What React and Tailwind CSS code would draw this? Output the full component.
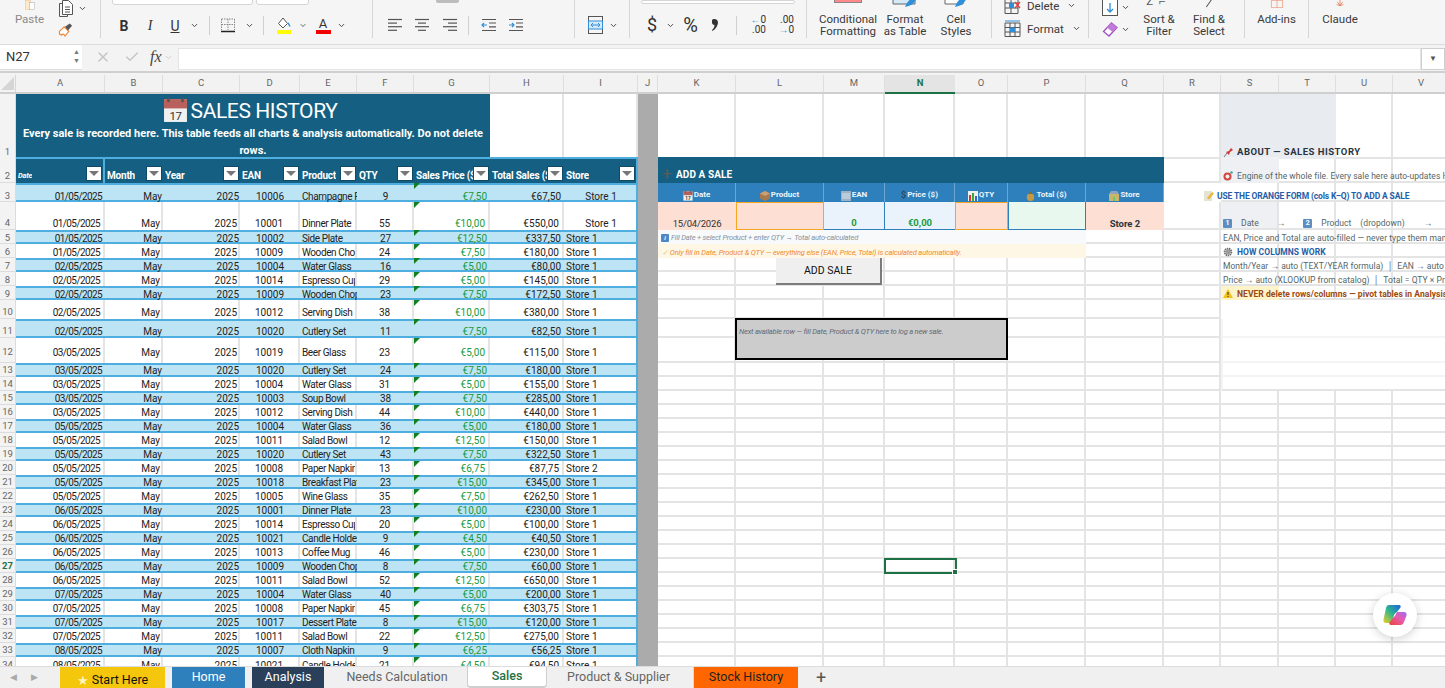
import { Check, ChevronDown, X } from "lucide-react";

const GRID =
  "grid grid-cols-[16px_89px_58px_77px_60px_57px_57px_76px_74px_74px_20px_78px_88px_61px_70px_53px_78px_78px_57px_58px_57px_57px_57px]";

const LETTERS = "ABCDEFGHIJKLMNOPQRSTUV".split("");

const SALES = [
  ["01/05/2025", "10006", "Champagne Flute", 9, "7,50", "67,50"],
  ["01/05/2025", "10001", "Dinner Plate", 55, "10,00", "550,00"],
  ["01/05/2025", "10002", "Side Plate", 27, "12,50", "337,50"],
  ["01/05/2025", "10009", "Wooden Chopsticks", 24, "7,50", "180,00"],
  ["02/05/2025", "10004", "Water Glass", 16, "5,00", "80,00"],
  ["02/05/2025", "10014", "Espresso Cup", 29, "5,00", "145,00"],
  ["02/05/2025", "10009", "Wooden Chopsticks", 23, "7,50", "172,50"],
  ["02/05/2025", "10012", "Serving Dish", 38, "10,00", "380,00"],
  ["02/05/2025", "10020", "Cutlery Set", 11, "7,50", "82,50"],
  ["03/05/2025", "10019", "Beer Glass", 23, "5,00", "115,00"],
  ["03/05/2025", "10020", "Cutlery Set", 24, "7,50", "180,00"],
  ["03/05/2025", "10004", "Water Glass", 31, "5,00", "155,00"],
  ["03/05/2025", "10003", "Soup Bowl", 38, "7,50", "285,00"],
  ["03/05/2025", "10012", "Serving Dish", 44, "10,00", "440,00"],
  ["05/05/2025", "10004", "Water Glass", 36, "5,00", "180,00"],
  ["05/05/2025", "10011", "Salad Bowl", 12, "12,50", "150,00"],
  ["05/05/2025", "10020", "Cutlery Set", 43, "7,50", "322,50"],
  ["05/05/2025", "10008", "Paper Napkin", 13, "6,75", "87,75", "Store 2"],
  ["05/05/2025", "10018", "Breakfast Plate", 23, "15,00", "345,00"],
  ["05/05/2025", "10005", "Wine Glass", 35, "7,50", "262,50"],
  ["06/05/2025", "10001", "Dinner Plate", 23, "10,00", "230,00"],
  ["06/05/2025", "10014", "Espresso Cup", 20, "5,00", "100,00"],
  ["06/05/2025", "10021", "Candle Holder", 9, "4,50", "40,50"],
  ["06/05/2025", "10013", "Coffee Mug", 46, "5,00", "230,00"],
  ["06/05/2025", "10009", "Wooden Chopsticks", 8, "7,50", "60,00"],
  ["06/05/2025", "10011", "Salad Bowl", 52, "12,50", "650,00"],
  ["07/05/2025", "10004", "Water Glass", 40, "5,00", "200,00"],
  ["07/05/2025", "10008", "Paper Napkin", 45, "6,75", "303,75"],
  ["07/05/2025", "10017", "Dessert Plate", 8, "15,00", "120,00"],
  ["07/05/2025", "10011", "Salad Bowl", 22, "12,50", "275,00"],
  ["08/05/2025", "10007", "Cloth Napkin", 9, "6,25", "56,25"],
  ["08/05/2025", "10021", "Candle Holder", 21, "4,50", "94,50"],
];

const rowHeight = (n) => {
  if (n === 1) return "h-[63px]";
  if (n === 2) return "h-[26px]";
  if (n === 3) return "h-[19px]";
  if (n === 4) return "h-[28px]";
  if (n === 10 || n === 11) return "h-[19px]";
  if (n === 12) return "h-[24.5px]";
  if (n < 10) return "h-[14px]";
  return "h-[14.05px]";
};

// rows 3 and 5-9 sit one pixel lower in their cell, row 12 floats higher
const textFit = (n) => {
  if (n === 12) return "leading-[12px] pb-[4px]";
  if (n === 3 || (n >= 5 && n <= 9)) return "leading-[10px]";
  return "leading-[12px]";
};

const Blank = ({ className = "border-[#e4e4e4]" }) => (
  <div className={`border-r-2 border-b-2 ${className}`} />
);

const Chev = ({ className = "" }) => (
  <ChevronDown size={9} strokeWidth={2.5} className={`text-[#444] ${className}`} />
);

const Divider = ({ className = "" }) => (
  <div className={`w-px h-[19px] bg-[#cfcfcf] ${className}`} />
);

const Lines = ({ rows }) => (
  <svg width="14" height="14" viewBox="0 0 14 14" stroke="#555" strokeWidth="1.2">
    {rows.map(([a, b], i) => (
      <line key={i} x1={a} x2={b} y1={1.5 + i * 3.6} y2={1.5 + i * 3.6} />
    ))}
  </svg>
);

const Indent = ({ flip }) => (
  <svg width="15" height="14" viewBox="0 0 15 14" fill="none">
    <path d="M1 1.5h14M8 5h7M8 8.800h7M1 12.500h14" stroke="#555" strokeWidth="1.200" />
    <path
      d={flip ? "M1 7h5M4 5l2 2-2 2" : "M1 7h5M3 5L1 7l2 2"}
      stroke="#2f8fd8"
      strokeWidth="1.200"
    />
  </svg>
);

const Ribbon = () => (
  <div className="flex h-[45px] shrink-0 overflow-hidden bg-[#f5f5f5] border-b border-[#dcdcdc] text-[#3a3a3a] text-[11.500px] leading-[12px]">
    {/* clipboard */}
    <div className="flex w-[101px] shrink-0 border-r border-[#d6d6d6] mb-[6px]">
      <div className="w-[59px] flex flex-col items-center justify-end pb-[13px]">
        <svg width="26" height="24" viewBox="0 0 26 24" fill="none">
          <rect x="2" y="1" width="12" height="22" fill="#fdeacb" stroke="#eab67a" />
          <rect x="12" y="6" width="12" height="17" fill="#fff" stroke="#999" />
        </svg>
        <span className="text-[#8a8a8a] mt-[3px]">Paste</span>
      </div>
      <div className="flex flex-col justify-end pb-[1px] gap-[6px]">
        <div className="flex items-center gap-[5px]">
          <svg width="14" height="17" viewBox="0 0 14 17" fill="none" stroke="#555">
            <path d="M3.500 3.500h-3v13h8v-2" />
            <path d="M3.500.5h6l4 4v10h-10z" fill="#fff" />
            <path d="M6 7h5M6 9.500h5M6 12h5" />
          </svg>
          <Chev />
        </div>
        <svg width="16" height="15" viewBox="0 0 16 15" fill="none" className="ml-[-1px]">
          <path d="M1 9l5-5 5 5-4 5c-1-1-1-2-2-2s-2 1-2 1-1-1-2-1z" fill="#fff" stroke="#ee8a3c" strokeWidth="1.300" />
          <path d="M7 4l5-3.500 2.500 2.500L10 8z" fill="#555" />
        </svg>
      </div>
    </div>

    {/* font */}
    <div className="flex flex-col justify-end w-[272px] shrink-0 border-r border-[#d6d6d6] mb-[6px]">
      <div className="flex pl-[11px] gap-[3px] mb-[11px]">
        <div className="w-[141px] h-[14px] bg-white border border-[#d5d5d5] rounded-[3px]" />
        <div className="w-[53px] h-[14px] bg-white border border-[#d5d5d5] rounded-[3px]" />
      </div>
      <div className="flex items-center h-[20px] pl-[10px] mb-[3px] text-[14px] text-[#333]">
        <span className="w-[26px] text-center font-bold">B</span>
        <span className="w-[26px] text-center italic font-[Liberation_Serif,serif]">I</span>
        <span className="w-[24px] text-center underline">U</span>
        <span className="w-[14px] flex justify-center"><Chev /></span>
        <Divider className="ml-[8px]" />
        <svg width="16" height="15" viewBox="0 0 16 15" fill="none" className="ml-[10px]">
          <path d="M1.500 1h13M1.500 1v11M14.500 1v11M8 1v11M1.500 6.500h13" stroke="#888" strokeDasharray="1.500 1" />
          <path d="M1 13.500h14" stroke="#222" strokeWidth="1.500" />
        </svg>
        <span className="w-[10px] ml-[8px] flex justify-center"><Chev /></span>
        <Divider className="ml-[9px]" />
        <svg width="14" height="17" viewBox="0 0 14 17" fill="none" className="ml-[13px]">
          <path d="M6 1L1.500 6.500 6 11l4.500-4.500z" stroke="#555" fill="#fff" />
          <path d="M11 6c1 1.500 1.800 2.500 1.800 3.500" stroke="#2f8fd8" strokeWidth="1.500" />
          <rect x="0" y="13" width="14" height="4" fill="#ffff00" />
        </svg>
        <span className="w-[8px] ml-[8px] flex justify-center"><Chev /></span>
        <span className="w-[14px] ml-[9px] flex flex-col items-center text-[13px] leading-[13px]">
          A
          <span className="w-[15px] h-[4px] bg-[#f00000] block" />
        </span>
        <span className="w-[10px] ml-[6px] flex justify-center"><Chev /></span>
      </div>
    </div>

    {/* alignment */}
    <div className="flex flex-col justify-end w-[202px] shrink-0 border-r border-[#d6d6d6] mb-[6px]">
      <div className="w-[23px] h-[3px] ml-[63px] mb-[13px] bg-[#bdbdbd] rounded-b-[2px]" />
      <div className="flex items-center h-[20px] pl-[15px] mb-[3px]">
        <Lines rows={[[0, 14], [0, 9], [0, 14], [0, 9]]} />
        <span className="ml-[13px]"><Lines rows={[[0, 14], [3, 11], [0, 14], [3, 11]]} /></span>
        <span className="ml-[14px]"><Lines rows={[[0, 14], [5, 14], [0, 14], [5, 14]]} /></span>
        <Divider className="ml-[11px]" />
        <span className="ml-[12px]"><Indent /></span>
        <span className="ml-[12px]"><Indent flip /></span>
      </div>
    </div>

    {/* merge */}
    <div className="flex items-end w-[55px] shrink-0 border-r border-[#d6d6d6] mb-[6px] pl-[13px] pb-[4px] gap-[6px]">
      <svg width="15" height="18" viewBox="0 0 15 18" fill="none">
        <rect x=".5" y=".5" width="14" height="17" stroke="#555" />
        <rect x=".5" y="5" width="14" height="8" fill="#d6e9f8" stroke="#2f8fd8" />
        <path d="M3 9h9M3 9l2-2M3 9l2 2M12 9l-2-2M12 9l-2 2" stroke="#2f8fd8" />
      </svg>
      <Chev className="mb-[4px]" />
    </div>

    {/* number */}
    <div className="flex flex-col justify-end w-[177px] shrink-0 border-r border-[#d6d6d6] mb-[6px]">
      <div className="w-[154px] h-[14px] ml-[11px] mb-[11px] bg-white border border-[#d5d5d5] rounded-[3px]" />
      <div className="flex items-center h-[20px] pl-[17px] mb-[3px] text-[#333]">
        <span className="text-[18px] w-[10px] text-center">$</span>
        <Chev className="ml-[9px]" />
        <span className="text-[20px] ml-[6px] w-[19px] text-center">%</span>
        <svg width="7" height="12" viewBox="0 0 7 12" className="ml-[11px]">
          <path d="M1 1.500C1 .5 2 0 3.500 0S7 1 7 3.500 5 10 1.500 12L1 11c1.500-1 2.500-3 2.500-5C2 6 1 5 1 3.500z" fill="#333" />
        </svg>
        <Divider className="ml-[18px]" />
        <span className="ml-[11px] w-[18px] text-[10px] leading-[10px] text-right">
          <span className="text-[#2f8fd8]">←</span>0<br />.00
        </span>
        <span className="ml-[10px] w-[18px] text-[10px] leading-[10px] text-right">
          .00<br /><span className="text-[#2f8fd8]">→</span>0
        </span>
      </div>
    </div>

    {/* styles */}
    <div className="flex w-[185px] shrink-0 border-r border-[#d6d6d6] mb-[6px] pb-[1px] pl-[7px] items-end text-center">
      <div className="w-[68px] flex flex-col items-center">
        <div className="w-[28px] h-[20px] bg-[#f88] border border-[#888] mb-[10px]" />
        <span>Conditional<br />Formatting</span>
      </div>
      <div className="w-[46px] flex flex-col items-center">
        <svg width="28" height="20" viewBox="0 0 28 20" fill="none" className="mb-[5px]">
          <path d="M2 2h22v14H2z" fill="#d6e9f8" stroke="#666" />
          <path d="M14 19c2-6 6-9 12-11-1 6-5 10-12 11z" fill="#2f8fd8" />
        </svg>
        <span>Format<br />as Table</span>
      </div>
      <div className="w-[56px] flex flex-col items-center">
        <svg width="26" height="20" viewBox="0 0 26 20" fill="none" className="mb-[5px]">
          <path d="M2 2h18v14H2z" fill="#fff" stroke="#666" />
          <path d="M12 19c2-6 5-9 12-11-1 6-5 10-12 11z" fill="#2f8fd8" />
        </svg>
        <span>Cell<br />Styles</span>
      </div>
    </div>

    {/* cells */}
    <div className="flex flex-col justify-end w-[97px] shrink-0 border-r border-[#d6d6d6] mb-[6px] pl-[12px] pb-[1px] gap-[6px]">
      <div className="flex items-center">
        <svg width="18" height="17" viewBox="0 0 18 17" fill="none">
          <path d="M1 .5h13v16H1zM1 6h13M1 11h13M7 .5v16" stroke="#555" />
          <rect x="5" y="6" width="5" height="5" fill="#2f8fd8" />
          <path d="M11 5l5 6M16 5l-5 6" stroke="#e43c3c" strokeWidth="1.300" />
        </svg>
        <span className="ml-[5px] mr-[8px]">Delete</span>
        <Chev />
      </div>
      <div className="flex items-center">
        <svg width="17" height="17" viewBox="0 0 17 17" fill="none">
          <path d="M1 3h15v13.500H1zM1 7.500h15M1 12h15M6 3v13.500M11 3v13.500" stroke="#555" />
          <rect x="6" y="7.500" width="5" height="4.500" fill="#2f8fd8" />
          <path d="M1 1h15" stroke="#2f8fd8" />
        </svg>
        <span className="ml-[6px] mr-[8px]">Format</span>
        <Chev />
      </div>
    </div>

    {/* editing */}
    <div className="flex w-[156px] shrink-0 border-r border-[#d6d6d6] mb-[6px] pb-[1px] items-end text-center">
      <div className="w-[44px] flex flex-col pl-[13px] gap-[6px]">
        <div className="flex items-center gap-[3px]">
          <svg width="16" height="18" viewBox="0 0 16 18" fill="none" className="shrink-0">
            <rect x=".5" y=".5" width="15" height="17" stroke="#555" fill="#fff" />
            <path d="M8 5v9M5 11l3 3 3-3" stroke="#2f8fd8" strokeWidth="1.300" />
          </svg>
          <Chev className="shrink-0" />
        </div>
        <div className="flex items-center gap-[3px]">
          <svg width="16" height="15" viewBox="0 0 16 15" fill="none" className="shrink-0">
            <path d="M9.500 1L15 5.500 7 14 1.500 9.500z" fill="#fff" stroke="#a04fc0" strokeWidth="1.300" />
            <path d="M5 5.500L10.500 10 15 5.500 9.500 1z" fill="#c07ad8" />
          </svg>
          <Chev className="shrink-0" />
        </div>
      </div>
      <div className="w-[52px] flex flex-col items-center">
        <span className="h-[14px] text-[#555] mb-[4px] tracking-[6px]">Z⌐</span>
        <span>Sort &<br />Filter</span>
      </div>
      <div className="w-[48px] flex flex-col items-center">
        <span className="w-px h-[11px] bg-[#555] rotate-[35deg] mb-[5px]" />
        <span>Find &<br />Select</span>
      </div>
    </div>

    <div className="flex flex-col items-center justify-end w-[64px] shrink-0 border-r border-[#d6d6d6] mb-[6px] pb-[13px]">
      <svg width="30" height="20" viewBox="0 0 30 20" fill="none" className="mb-[5px]">
        <path d="M1 1h28v18H1zM15 1v18" stroke="#e8663c" strokeWidth="1.200" />
      </svg>
      <span>Add-ins</span>
    </div>
    <div className="flex flex-col items-center justify-end w-[62px] shrink-0 mb-[6px] pb-[13px]">
      <svg width="20" height="16" viewBox="0 0 20 16" fill="none" stroke="#e0693f" strokeWidth="1.800" className="mb-[7px]">
        <path d="M10 0v15M3 5l7 10M17 5l-7 10M1 12l9 3M19 12l-9 3" />
      </svg>
      <span>Claude</span>
    </div>
  </div>
);

const FormulaBar = () => (
  <div className="flex h-[28px] shrink-0 bg-[#f3f3f3] border-b-2 border-[#cfcfcf] text-[#333]">
    <div className="w-[82px] h-[25px] shrink-0 bg-white flex items-center justify-between pl-[6px] pr-[2px] text-[13px] border-b border-[#ddd]">
      N27
      <span className="text-[7px] leading-[9px] text-[#777]">▲<br />▼</span>
    </div>
    <div className="w-[96px] shrink-0 flex items-center pl-[13px] text-[#c4c4c4] pb-[2px]">
      <X size={16} />
      <Check size={16} className="ml-[13px]" />
      <span className="ml-[10px] text-[#444] text-[16px] italic font-[Liberation_Serif,serif]">fx</span>
      <ChevronDown size={9} className="ml-[2px]" />
    </div>
    <div className="flex-1 h-[22px] mt-[3px] bg-white border border-[#e4e4e4]" />
    <div className="w-[24px] h-[22px] mt-[3px] bg-white border border-[#cfcfcf] flex items-center justify-center text-[8px] text-[#555]">
      ▼
    </div>
  </div>
);

const ColumnHeaders = () => (
  <div className={`${GRID} h-[19px] shrink-0 bg-[#f2f2f2] border-b-2 border-[#cfcfcf] text-[9.500px] text-[#666] mt-[2px]`}>
    <div className="border-r border-[#d8d8d8] bg-[#f2f2f2] flex items-end justify-end">
      <span className="w-0 h-0 border-b-[13px] border-l-[13px] border-b-[#d5d5d5] border-l-transparent mr-[1px] mb-[2px]" />
    </div>
    {LETTERS.map((l) =>
      l === "N" ? (
        <div key={l} className="flex items-center justify-center bg-[#e4e4e4] text-[#1e7145] font-bold border-b-2 border-[#1e7145] -mb-[2px]">
          {l}
        </div>
      ) : (
        <div key={l} className="flex items-center justify-center border-r border-[#dedede]">
          {l}
        </div>
      )
    )}
  </div>
);

const RowHead = ({ n }) => (
  <div
    className={`flex items-end justify-center bg-[#f3f3f3] border-r border-b border-[#dcdcdc] text-[9.500px] ${textFit(n)} ${
      n === 27 ? "text-[#1e7145] font-bold" : "text-[#666]"
    }`}
  >
    {n}
  </div>
);

const FilterBtn = () => (
  <span className="w-[16px] h-[15px] shrink-0 bg-white border border-[#0f4a66] flex items-center justify-center mb-[2px]">
    <span className="w-0 h-0 border-x-[5px] border-t-[5px] border-x-transparent border-t-[#777]" />
  </span>
);

const HEADS = ["Date", "Month", "Year", "EAN", "Product", "QTY", "Sales Price ($)", "Total Sales ($)", "Store"];

const TableHeader = () =>
  HEADS.map((h, i) => (
    <div
      key={h}
      className={`flex items-end justify-between pl-[2px] pr-px bg-[#156082] border-t-2 border-[#4eaee0] text-white font-bold text-[10px] leading-[13px] tracking-[-0.2px] min-w-0 ${
        i === 0 ? "border-r-2" : ""
      } ${i === 8 ? "border-r-2" : ""}`}
    >
      <span className={`overflow-hidden whitespace-nowrap min-w-0 pb-[1px] ${i === 0 ? "text-[7.500px] italic" : ""}`}>{h}</span>
      <FilterBtn />
    </div>
  ));

const TableCells = ({ n, sale }) => {
  const [date, ean, product, qty, price, total, store = "Store 1"] = sale;
  const tone =
    n % 2 === 1
      ? "bg-[#bde4f5] shadow-[inset_0_2px_0_#4eaee0,inset_0_-2px_0_#4eaee0]"
      : "bg-white border-r-2 border-[#e4e4e4]";
  const cell = `flex items-end overflow-hidden whitespace-nowrap ${textFit(n)} ${tone}`;
  return (
    <>
      <div className={`${cell} justify-end pr-[3px] text-[#222] tracking-[-0.6px]`}>{date}</div>
      <div className={`${cell} justify-end pr-[1px] text-[#222]`}>May</div>
      <div className={`${cell} justify-end pr-[1px] text-[#222]`}>2025</div>
      <div className={`${cell} justify-center text-[#222]`}>{ean}</div>
      <div className={`${cell} pl-[2px] text-[#222] tracking-[-0.4px]`}>{product}</div>
      <div className={`${cell} justify-center text-[#222]`}>{qty}</div>
      <div className={`${cell} relative justify-end pr-[3px] text-[#1a9a3c]`}>
        <span className="absolute top-0 left-0 w-0 h-0 border-t-[6px] border-r-[6px] border-t-[#12801f] border-r-transparent" />
        €{price}
      </div>
      <div className={`${cell} justify-end pr-[3px] text-[#222]`}>€{total}</div>
      <div
        className={`${cell} ${n <= 4 ? "justify-center pl-[2px]" : "pl-[2px]"} border-r-2 border-r-[#4eaee0] text-[#222]`}
      >
        {store}
      </div>
    </>
  );
};

const CalendarIcon = ({ size = 10 }) => (
  <svg width={size} height={size} viewBox="0 0 24 24" className="shrink-0">
    <rect x="1" y="1" width="22" height="22" fill="#f1f1f1" />
    <rect x="1" y="1" width="22" height="9" fill="#b9605c" />
    <rect x="4" y="0" width="2.500" height="4" fill="#555" />
    <rect x="17.500" y="0" width="2.500" height="4" fill="#555" />
    <text x="12" y="21" fontSize="11" textAnchor="middle" fill="#333" fontFamily="Roboto, sans-serif">17</text>
  </svg>
);

const MiniIcon = ({ kind }) => {
  if (kind === "date") return <CalendarIcon />;
  if (kind === "box")
    return (
      <svg width="10" height="10" viewBox="0 0 10 10">
        <path d="M5 0l5 2.500v5L5 10 0 7.500v-5z" fill="#a9794b" />
        <path d="M5 5l5-2.500L5 0 0 2.500z" fill="#c9a073" />
      </svg>
    );
  if (kind === "ean")
    return (
      <svg width="10" height="10" viewBox="0 0 10 10">
        <rect width="10" height="10" fill="#9bb3c4" />
        <path d="M2 2v6M4 2v6M6 2v6M8 2v6" stroke="#eef" strokeWidth=".8" />
      </svg>
    );
  if (kind === "bars")
    return (
      <svg width="10" height="10" viewBox="0 0 10 10">
        <rect width="10" height="10" fill="#eee" />
        <rect x="1" y="4" width="2" height="6" fill="#d33" />
        <rect x="4" y="2" width="2" height="8" fill="#3a3" />
        <rect x="7" y="5" width="2" height="5" fill="#36c" />
      </svg>
    );
  if (kind === "bag")
    return (
      <svg width="9" height="10" viewBox="0 0 9 10">
        <circle cx="4.500" cy="6.300" r="3.700" fill="#c59a45" />
        <rect x="3" y="0.500" width="3" height="2.500" fill="#8a6b2c" />
      </svg>
    );
  if (kind === "store")
    return (
      <svg width="10" height="10" viewBox="0 0 10 10">
        <rect y="3" width="10" height="7" fill="#c9b66a" />
        <path d="M0 3l2-3h6l2 3z" fill="#8fa4b8" />
        <rect x="4" y="6" width="2" height="4" fill="#6c6" />
      </svg>
    );
  return <span className="text-[#2b4a62] text-[9px]">$</span>;
};

const FORM_HEADS = [
  ["date", "Date"],
  ["box", "Product"],
  ["ean", "EAN"],
  ["usd", "Price ($)"],
  ["bars", "QTY"],
  ["bag", "Total ($)"],
  ["store", "Store"],
];

const formCells = (n) => {
  if (n === 2)
    return [
      <div key="f" className="col-span-7 bg-[#156082] flex items-end pl-[4px] pb-[1px] text-white font-bold text-[10px] leading-[14px] tracking-[0.1px]">
        <span className="text-[#5d5a5a] text-[17px] leading-[18px] font-normal w-[10px] mr-[4px]">+</span>
        ADD A SALE
      </div>,
    ];
  if (n === 3)
    return FORM_HEADS.map(([k, t]) => (
      <div key={t} className="flex items-end justify-center gap-px bg-[#2e80bd] border-r border-[#6ea6d1] text-[#eef4fa] font-bold text-[8px] leading-[12px] pb-px">
        <MiniIcon kind={k} />
        {t}
      </div>
    ));
  if (n === 4) {
    const c = "flex items-end justify-center text-[9.500px] leading-[12px]";
    return [
      <div key="k" className={`${c} bg-[#fde0d3] text-[#333] tracking-[-0.2px]`}>15/04/2026</div>,
      <div key="l" className="bg-[#fde0d3] border border-[#f5a623]" />,
      <div key="m" className={`${c} bg-[#eaf3fb] border-b border-r border-[#2e80bd] text-[#1a9a3c] font-bold`}>0</div>,
      <div key="n" className={`${c} bg-[#eaf3fb] border-b border-[#2e80bd] text-[#1a9a3c] font-bold`}>€0,00</div>,
      <div key="o" className="bg-[#fde0d3] border border-[#f5a623]" />,
      <div key="p" className="bg-[#e8f8ee] border border-[#2e80bd] border-t-0" />,
      <div key="q" className={`${c} bg-[#fde0d3] text-[#2b3440] font-bold`}>Store 2</div>,
    ];
  }
  if (n === 5)
    return [
      <div key="f" className="col-span-6 bg-[#f7f9fb] flex items-center gap-[2px] pl-[3px] pt-[2px] italic text-[#8a929c] text-[7.500px] leading-[12px] tracking-[-0.2px] overflow-hidden whitespace-nowrap">
        <span className="w-[8px] h-[8px] shrink-0 bg-[#4f86c6] rounded-[1px] text-white text-center leading-[8px] font-bold text-[6px]">i</span>
        Fill Date + select Product + enter QTY → Total auto-calculated
      </div>,
      <Blank key="q" />,
    ];
  if (n === 6)
    return [
      <div key="f" className="col-span-6 bg-[#fff7e6] flex items-center gap-[2px] pl-[4px] pt-[3px] italic text-[#ef8a2e] text-[7.500px] leading-[11px] tracking-[-0.15px] overflow-hidden whitespace-nowrap">
        <span className="text-[#e8c56a]">✓</span>
        Only fill in Date, Product & QTY — everything else (EAN, Price, Total) is calculated automatically.
      </div>,
      <Blank key="q" />,
    ];
  return Array.from({ length: 7 }, (_, i) => <Blank key={i} />);
};

const Pin = () => (
  <svg width="11" height="11" viewBox="0 0 11 11" className="mr-[3px] shrink-0">
    <path d="M1 10l3-4" stroke="#777" />
    <path d="M3 5l3-1 2-3 2 2-3 2-1 3z" fill="#d4352e" />
  </svg>
);

const Target = () => (
  <svg width="10" height="10" viewBox="0 0 10 10" className="mr-[4px] mb-[1px] shrink-0">
    <circle cx="4.500" cy="5.500" r="4" fill="#d4453e" />
    <circle cx="4.500" cy="5.500" r="2" fill="#eee" />
    <circle cx="8.500" cy="1.500" r="1.300" fill="#3aa8a8" />
  </svg>
);

const Memo = () => (
  <svg width="10" height="10" viewBox="0 0 10 10" className="mr-[3px] mb-[1px] shrink-0">
    <rect width="8" height="10" fill="#e6e2d4" />
    <path d="M3 7l5-6 2 1.500-5 6z" fill="#e8b93a" />
  </svg>
);

const Gear = () => (
  <svg width="10" height="10" viewBox="0 0 10 10" className="mr-[4px] mb-[1px] shrink-0">
    <circle cx="5" cy="5" r="3.300" fill="none" stroke="#6e6e6e" strokeWidth="2" strokeDasharray="1.400 .6" />
    <circle cx="5" cy="5" r="2.400" fill="#9a9a9a" />
  </svg>
);

const Warn = () => (
  <svg width="10" height="9" viewBox="0 0 10 9" className="mr-[4px] mb-[2px] shrink-0">
    <path d="M5 0l5 9H0z" fill="#f2c21a" />
    <path d="M5 3v3M5 7v1" stroke="#333" />
  </svg>
);

const NumBox = ({ children, className = "" }) => (
  <span className={`w-[9px] h-[9px] shrink-0 mb-[1px] bg-[#5a8fc4] text-white text-[7px] leading-[9px] text-center font-bold rounded-[1px] ${className}`}>
    {children}
  </span>
);

const FAINT = "border-[#f4f4f4]";

const Note = ({ className = "", children }) => (
  <div className={`relative z-10 flex items-end whitespace-nowrap border-r-2 border-b-2 leading-[12px] text-[8.500px] tracking-[0.05px] pl-[2px] ${className}`}>
    <div className="flex items-end -mb-[2px]">{children}</div>
  </div>
);

const GRAY = "text-[#566]";

const rightCells = (n) => {
  const R = <Blank key="r" />;
  const rest = (count, cls) =>
    Array.from({ length: count }, (_, i) => <Blank key={`b${i}`} className={cls} />);
  if (n === 1)
    return [
      R,
      <div key="s" className="col-span-2 relative z-10 bg-[#e8ebf0] flex items-end pl-[2px] pb-[1px] whitespace-nowrap text-[9.500px] tracking-[0.5px] leading-[12px] font-bold text-[#2a3440]">
        <Pin />
        ABOUT — SALES HISTORY
      </div>,
      ...rest(2),
    ];
  if (n === 2)
    return [
      R,
      <Note key="s" className={`bg-[#eef0f4] border-[#eef0f4] pb-[1px] ${GRAY}`}><Target />Engine of the whole file. Every sale here auto-updates Home, Analysis and Stock</Note>,
      ...rest(3),
    ];
  if (n === 3)
    return [
      <div key="r" className="relative z-10 flex items-end pl-[40px] whitespace-nowrap text-[8.500px] leading-[12px] font-bold text-[#1f5ea8] tracking-[-0.15px]">
        <Memo />
        USE THE ORANGE FORM (cols K–Q) TO ADD A SALE
      </div>,
      ...rest(4),
    ];
  if (n === 4)
    return [
      R,
      <Note key="s" className={`bg-[#eef0f4] border-[#e4e4e4] pb-[1px] ${GRAY}`}>
        <NumBox>1</NumBox>
        <span className="ml-[9px]">Date</span>
        <span className="ml-[18px]">→</span>
        <NumBox className="ml-[18px]">2</NumBox>
        <span className="ml-[9px]">Product</span>
        <span className="ml-[9px]">(dropdown)</span>
        <span className="ml-[19px]">→</span>
      </Note>,
      ...rest(3),
    ];
  if (n === 5)
    return [R, <Note key="s" className={`border-[#e4e4e4] ${GRAY}`}>EAN, Price and Total are auto-filled — never type them manually</Note>, ...rest(3)];
  if (n === 6)
    return [
      R,
      <Note key="s" className="border-[#e4e4e4] font-bold text-[#1f5ea8]"><Gear />HOW COLUMNS WORK</Note>,
      ...rest(3),
    ];
  if (n === 7)
    return [R, <Note key="s" className={`border-[#e4e4e4] ${GRAY}`}>Month/Year → auto (TEXT/YEAR formula) &nbsp;│&nbsp; EAN → auto (XLOOKUP from catalog)</Note>, ...rest(3)];
  if (n === 8)
    return [R, <Note key="s" className={`border-[#e4e4e4] ${GRAY}`}>Price → auto (XLOOKUP from catalog) &nbsp;│&nbsp; Total = QTY × Price</Note>, ...rest(3)];
  if (n === 9)
    return [
      R,
      <Note key="s" className="bg-[#fff3c9] border-[#fff3c9] font-bold text-[#9a4a12]"><Warn />NEVER delete rows/columns — pivot tables in Analysis sheet depend on them</Note>,
      ...rest(3),
    ];
  if (n === 10)
    return [R, ...Array.from({ length: 4 }, (_, i) => <div key={i} />)];
  if (n >= 11 && n <= 14)
    return [
      R,
      <div key="s" className={`col-span-3 border-l-2 border-b-2 ${FAINT} ${n === 14 ? "border-b-[#e4e4e4]" : ""}`} />,
      <Blank key="v" className={n === 14 ? "border-[#e4e4e4]" : FAINT} />,
    ];
  return rest(5);
};

const SheetRow = ({ n }) => {
  const sale = SALES[n - 3];
  return (
    <div className={`${GRID} ${rowHeight(n)} text-[10px]`}>
      <RowHead n={n} />
      {n === 1 ? (
        <>
          <div className="col-span-7 bg-[#156082] flex flex-col items-center text-white pt-[2px]">
            <div className="flex items-center h-[28px] pr-[6px] pt-[1px] text-[21px] tracking-[-0.4px] leading-[28px] gap-[3px]">
              <CalendarIcon size={25} />
              SALES HISTORY
            </div>
            <div className="font-bold text-[11px] leading-[17px] text-center mt-[1px] whitespace-nowrap">
              Every sale is recorded here. This table feeds all charts & analysis automatically. Do not delete
              <br />
              rows.
            </div>
          </div>
          <Blank />
          <Blank />
        </>
      ) : n === 2 ? (
        <TableHeader />
      ) : (
        <TableCells n={n} sale={sale} />
      )}
      <div className="bg-[#ababab]" />
      {n === 1 ? Array.from({ length: 7 }, (_, i) => <Blank key={i} />) : formCells(n)}
      {rightCells(n)}
    </div>
  );
};

const Sheet = () => (
  <div className="relative flex-1 overflow-hidden bg-white font-[Roboto,sans-serif]">
    {Array.from({ length: 34 }, (_, i) => (
      <SheetRow key={i} n={i + 1} />
    ))}

    {/* floating shapes on the sheet */}
    <button className="absolute left-[776px] top-[164px] w-[106px] h-[27px] bg-[#efefef] border-r-2 border-b-2 border-[#7c7c7c] text-[10.500px] text-[#111] z-20">
      ADD SALE
    </button>
    <div className="absolute left-[735px] top-[224px] w-[273px] h-[42px] bg-[#cccccc] border-2 border-black pl-[2px] pt-[7px] italic text-[7.500px] leading-[10px] tracking-[-0.2px] text-[#5f6b78] z-20">
      Next available row — fill Date, Product & QTY here to log a new sale.
    </div>
    <div className="absolute left-[884px] top-[464px] w-[73px] h-[16px] border-2 border-[#1e7145] z-20">
      <span className="absolute -right-[3px] -bottom-[3px] w-[6px] h-[6px] bg-[#1e7145] border border-white" />
    </div>
    <div className="absolute left-[1373px] top-[499px] w-[44px] h-[44px] rounded-full bg-white shadow-[0_2px_10px_rgba(0,0,0,0.18)] flex items-center justify-center z-20">
      <svg width="24" height="22" viewBox="0 0 24 22" fill="none">
        <defs>
          <linearGradient id="cpA" x1="0" y1="1" x2="1" y2="0">
            <stop offset="0" stopColor="#f4d11f" />
            <stop offset=".5" stopColor="#2fb68f" />
            <stop offset="1" stopColor="#1c5fe0" />
          </linearGradient>
          <linearGradient id="cpB" x1="0" y1="1" x2="1" y2="0">
            <stop offset="0" stopColor="#e8442f" />
            <stop offset=".55" stopColor="#e85bb0" />
            <stop offset="1" stopColor="#9a6df0" />
          </linearGradient>
        </defs>
        <path d="M6 1h10c1.500 0 2 1 1.500 2.500L14 8c-1.500 1-3 2-3.500 5l-1 4c-.5 1.500-2 2-3 2H3c-2 0-3-1.500-2.500-3.500L3 4C3.500 2 4.500 1 6 1z" fill="url(#cpA)" />
        <path d="M14 8h7c2 0 3 1.500 2.500 3.500L21 18c-.5 2-2 3-3.500 3H8c-1.500 0-2-1-1.500-2.500L10 14c1.500-1 2.500-3 4-6z" fill="url(#cpB)" />
      </svg>
    </div>
  </div>
);

const TabBar = () => (
  <div className="flex h-[22px] shrink-0 bg-[#f0f0f0] items-stretch text-[12.500px] text-[#666] font-[Roboto,sans-serif] border-t border-[#dcdcdc]">
    <div className="w-[60px] shrink-0 flex items-center pl-[10px] gap-[14px] text-[#aaa] text-[9px]">
      <span>◀</span>
      <span>▶</span>
    </div>
    <div className="w-[105px] bg-[#f4c60c] text-[#111] flex items-center justify-center gap-[3px] pt-[6px]">
      <span className="text-[#fff4b8] text-[13px] leading-[13px]">★</span>Start Here
    </div>
    <div className="w-[73px] ml-[7px] bg-[#2e80bd] text-white flex items-center justify-center">Home</div>
    <div className="w-[72px] ml-[7px] bg-[#2a3f5a] text-white flex items-center justify-center">Analysis</div>
    <div className="w-[143px] pl-[3px] flex items-center justify-center">Needs Calculation</div>
    <div className="w-[80px] bg-white text-[#1e7145] font-medium flex items-center justify-center rounded-b-[4px] border-x border-b-2 border-[#cfcfcf]">Sales</div>
    <div className="w-[147px] pr-[3px] flex items-center justify-center border-r border-[#d8d8d8]">Product & Supplier</div>
    <div className="w-[104px] bg-[#ff6600] text-[#222] flex items-center justify-center">Stock History</div>
    <div className="w-[46px] flex items-center justify-center text-[18px] text-[#555] leading-none">+</div>
  </div>
);

export default function App() {
  return (
    <div className="w-[1445px] h-[688px] overflow-hidden flex flex-col bg-[#f3f3f3] font-[Roboto,sans-serif]">
      <Ribbon />
      <FormulaBar />
      <ColumnHeaders />
      <Sheet />
      <TabBar />
    </div>
  );
}
